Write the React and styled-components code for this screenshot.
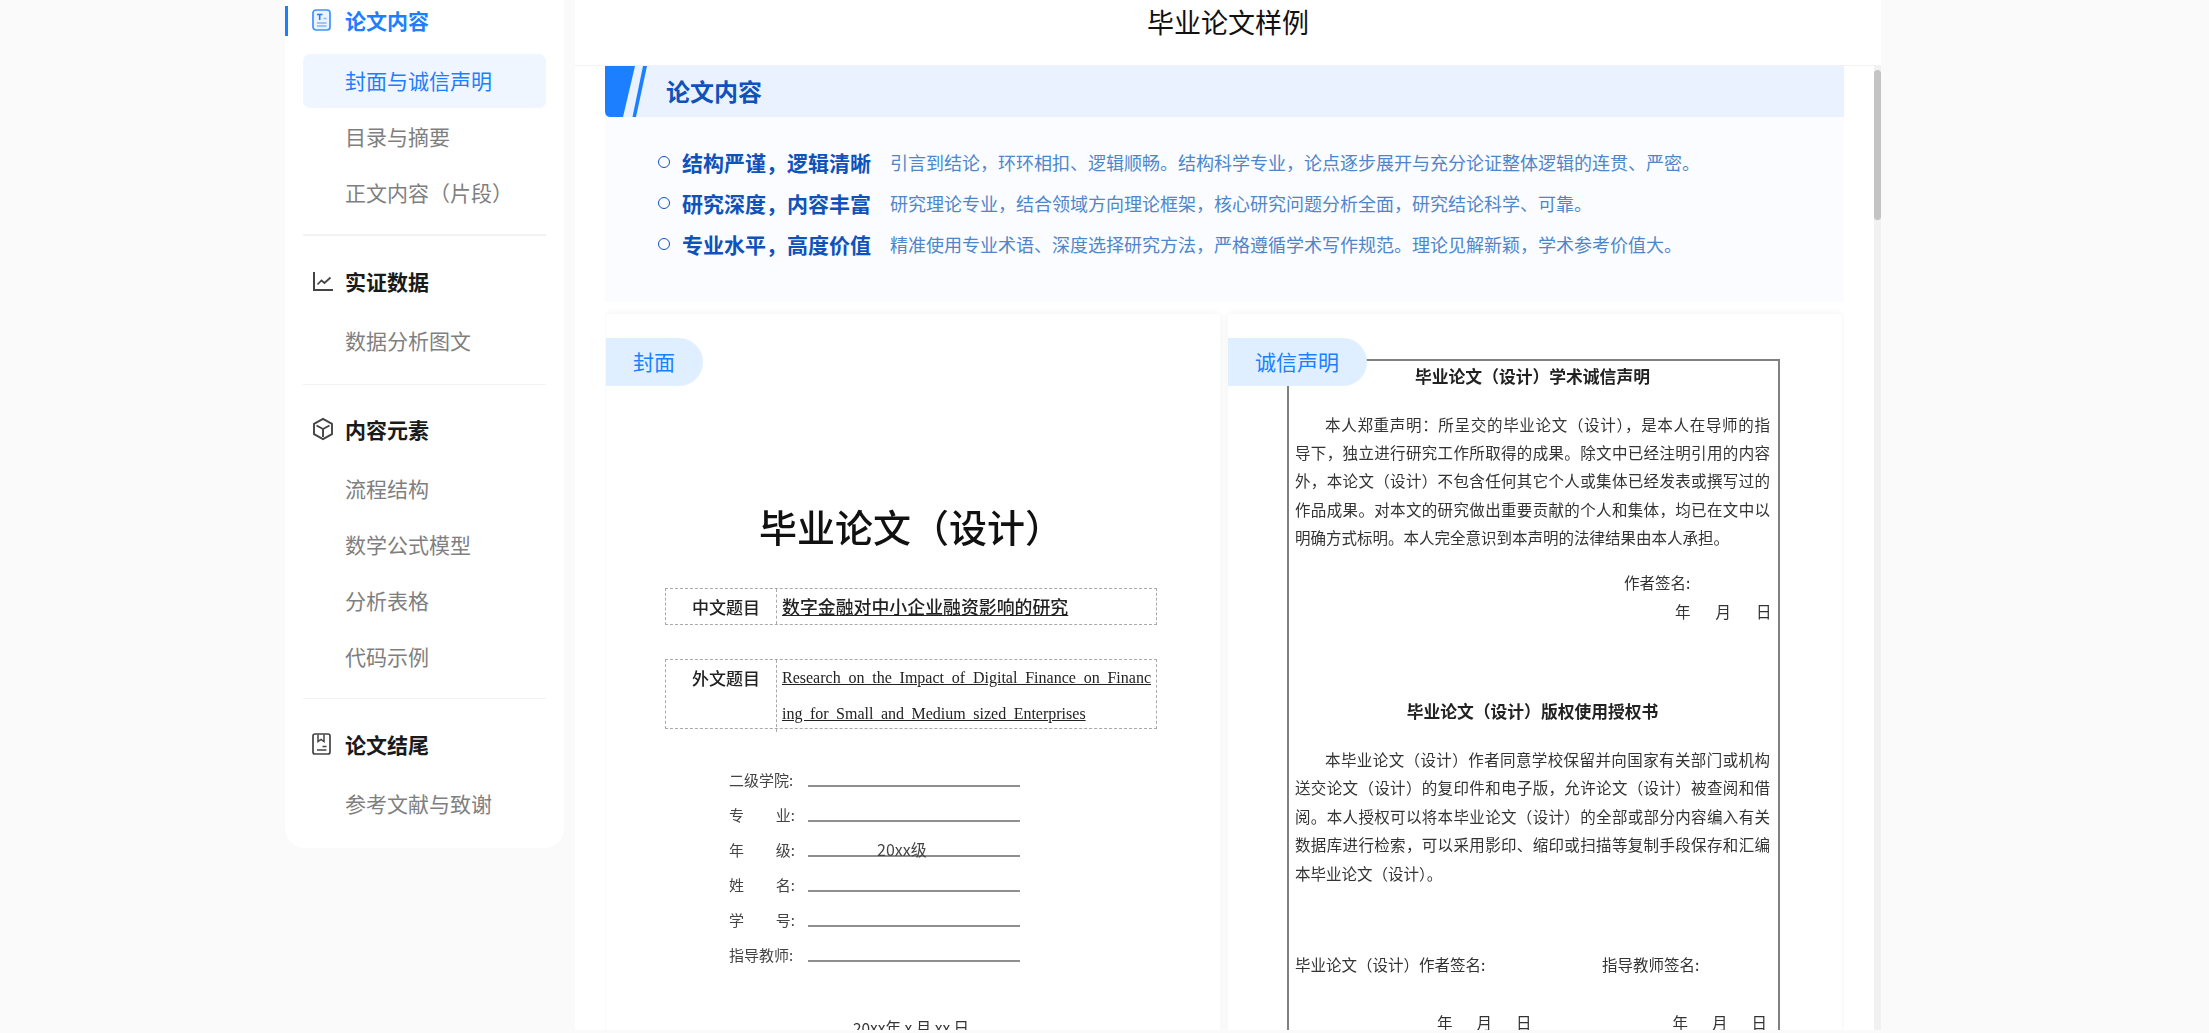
import React from "react";
import styled, { createGlobalStyle } from "styled-components";

const GlobalStyle = createGlobalStyle`
  html, body {
    margin: 0;
    padding: 0;
    height: 100%;
    overflow: hidden;
    background: #fafafa;
    font-family: "Noto Sans CJK SC", "Liberation Sans", sans-serif;
  }
  * {
    box-sizing: border-box;
  }
`;

const Page = styled.div`
  display: flex;
  align-items: flex-start;
  gap: 11px;
  height: 1033px;
  padding-left: 285px;
  overflow: hidden;
`;

/* sidebar */

const Sidebar = styled.aside`
  flex: none;
  width: 279px;
  padding: 6px 0 3px;
  background: #ffffff;
  border-radius: 0 0 20px 20px;
`;

const GroupTitle = styled.div`
  display: flex;
  align-items: center;
  height: 30px;
  padding-left: 24px;
  padding-bottom: 2px;
  border-left: 3px solid ${(p) => (p.$active ? "#1c7fff" : "transparent")};
  font-size: 21px;
  font-weight: 700;
  color: ${(p) => (p.$active ? "#1c7fff" : "#1a1a1a")};

  svg {
    flex: none;
    width: 22px;
    height: 24px;
    margin-right: 11px;
  }
`;

const NavList = styled.div`
  display: flex;
  flex-direction: column;
  gap: 2px;
  margin: ${(p) => p.$top}px 18px ${(p) => p.$bottom || 14}px;
`;

const NavItem = styled.div`
  height: 54px;
  padding-left: 42px;
  border-radius: 7px;
  font-size: 21px;
  line-height: 52px;
  background: ${(p) => (p.$active ? "#f0f6ff" : "transparent")};
  color: ${(p) => (p.$active ? "#1c7fff" : "#7f7f7f")};
`;

const Divider = styled.div`
  height: ${(p) => (p.$thick ? "2px" : "1px")};
  margin: 0 18px ${(p) => p.$after}px;
  background: #f2f2f2;
`;

/* main panel */

const Main = styled.main`
  flex: none;
  width: 1306px;
  height: 1030px;
  background: #ffffff;
  display: flex;
  flex-direction: column;
`;

const PageHeader = styled.header`
  flex: none;
  height: 66px;
  padding-top: 2px;
  text-align: center;
  font-size: 27px;
  line-height: 40px;
  color: #111111;
  border-bottom: 1px solid #f2f2f2;
`;

const ScrollArea = styled.div`
  flex: 1;
  min-height: 0;
  display: flex;
  padding-left: 30px;
`;

const Content = styled.div`
  flex: none;
  width: 1239px;
  margin-right: 30px;
  overflow: hidden;
`;

const ScrollTrack = styled.div`
  flex: none;
  width: 7px;
  padding-top: 4px;
  background: #f1f1f1;
`;

const ScrollThumb = styled.div`
  height: 150px;
  border-radius: 4px;
  background: #c4c4c4;
`;

const Banner = styled.div`
  display: flex;
  align-items: center;
  height: 51px;
  background: #e9f2fe;
  font-size: 24px;
  font-weight: 700;
  color: #0f52ba;

  svg {
    flex: none;
    width: 42px;
    height: 51px;
    margin-right: 19px;
  }
`;

const BannerTitle = styled.span`
  margin-top: -2px;
`;

const Highlights = styled.div`
  height: 185px;
  padding: 24px 0 0 53px;
  background: #fafcff;
`;

const HighlightRow = styled.div`
  display: flex;
  align-items: center;
  height: 41px;
`;

const Bullet = styled.span`
  flex: none;
  width: 12px;
  height: 12px;
  margin: 1px 12px 0 0;
  border: 1px solid #0f52ba;
  border-radius: 50%;
`;

const HighlightTitle = styled.strong`
  flex: none;
  width: 189px;
  margin-right: 19px;
  font-size: 21px;
  font-weight: 700;
  color: #0f52ba;
`;

const HighlightText = styled.span`
  font-size: 18px;
  color: #4f86c9;
`;

const CardRow = styled.div`
  display: grid;
  grid-template-columns: 614px 614px;
  gap: 8px;
  margin-top: 12px;
  padding: 0 1px;
`;

const Card = styled.section`
  position: relative;
  height: 760px;
  border-radius: 4px;
  background: #ffffff;
  box-shadow: 0 0 10px rgba(0, 0, 0, 0.06);
`;

const CardTab = styled.div`
  position: absolute;
  z-index: 1;
  top: 24px;
  left: 0;
  height: 48px;
  padding: 0 28px 0 27px;
  border-radius: 0 24px 24px 0;
  background: #e0efff;
  font-size: 21px;
  line-height: 47px;
  color: #1c7fff;
`;

/* cover scan */

const CoverDoc = styled.div`
  width: 492px;
  margin-left: 59px;
  padding-top: 190px;
  color: #222222;
  filter: blur(0.35px);
`;

const CoverTitle = styled.h1`
  margin: 0 0 40px;
  font-size: 38px;
  font-weight: 500;
  line-height: 44px;
  text-align: center;
  color: #111111;
`;

const TitleTable = styled.div`
  display: grid;
  grid-template-columns: 111px 1fr;
  height: ${(p) => p.$height}px;
  margin-bottom: ${(p) => p.$gap || 0}px;
  border: 1px dashed #aaaaaa;
`;

const TitleLabel = styled.div`
  padding-right: 16px;
  border-right: 1px dashed #aaaaaa;
  font-size: 17px;
  font-weight: 500;
  line-height: 35px;
  text-align: right;
`;

const TitleValue = styled.div`
  padding-left: 5px;
  font-size: 17.9px;
  font-weight: 500;
  line-height: 34px;
  text-decoration: underline;
  white-space: nowrap;
`;

const EnglishValue = styled.div`
  padding: 0 0 0 5px;
  font-family: "Liberation Serif", serif;
  font-size: 16px;
  line-height: 36px;
  text-decoration: underline;
  word-spacing: 3.5px;
`;

const EnglishLine = styled.div`
  width: 369px;
  white-space: nowrap;
  text-align: ${(p) => (p.$justify ? "justify" : "left")};
  text-align-last: ${(p) => (p.$justify ? "justify" : "left")};
`;

const FieldList = styled.div`
  margin: 34px 0 44px 64px;
`;

const FieldRow = styled.div`
  display: flex;
  height: 35px;
`;

const FieldLabel = styled.div`
  display: flex;
  justify-content: space-between;
  flex: none;
  width: 66px;
  margin-right: 13px;
  font-size: 15px;
  line-height: 33px;
  white-space: nowrap;
  color: #444444;
`;

const FieldLine = styled.div`
  width: 212px;
  height: 24px;
  padding-left: 69px;
  border-bottom: 2px solid #8f8f8f;
  font-size: 16px;
  line-height: 33px;
  color: #444444;
`;

const CoverDate = styled.div`
  font-size: 15.5px;
  line-height: 20px;
  text-align: center;
  color: #333333;
`;

/* statement scan */

const StatementDoc = styled.div`
  width: 493px;
  height: 720px;
  margin: 45px 0 0 59px;
  padding: 0 8px 0 6px;
  border: 2px solid #808080;
  border-bottom: none;
  color: #333333;
  filter: blur(0.35px);
`;

const DocHeading = styled.h2`
  margin: ${(p) => p.$gap || 0}px 0 18.5px;
  font-size: 16.8px;
  font-weight: 700;
  line-height: 30px;
  text-align: center;
  color: #222222;
`;

const DocLine = styled.div`
  height: 28.4px;
  padding-left: ${(p) => (p.$indent ? "30px" : 0)};
  font-size: 15.5px;
  line-height: 28.4px;
  white-space: nowrap;
  text-align: ${(p) => (p.$last ? "left" : "justify")};
  text-align-last: ${(p) => (p.$last ? "left" : "justify")};
`;

const SignLine = styled.div`
  margin: 17px 0 1px 329px;
  font-size: 15.5px;
  line-height: 28px;
`;

const DateGroup = styled.div`
  display: flex;
  gap: ${(p) => p.$gap}px;
  margin-left: ${(p) => p.$left}px;
  font-size: 15.5px;
  line-height: 28px;
`;

const SignGrid = styled.div`
  display: grid;
  grid-template-columns: 307px 1fr;
  margin: 63px 0 30px;
  font-size: 15.5px;
  line-height: 28px;
`;

const DateRow = styled.div`
  display: flex;
`;

const navGroups = [
  { title: "实证数据", icon: "chart", top: 17, bottom: 16, after: 30, items: ["数据分析图文"] },
  { title: "内容元素", icon: "cube", top: 17, after: 31, items: ["流程结构", "数学公式模型", "分析表格", "代码示例"] },
  { title: "论文结尾", icon: "book", top: 17, items: ["参考文献与致谢"] },
];

const highlights = [
  ["结构严谨，逻辑清晰", "引言到结论，环环相扣、逻辑顺畅。结构科学专业，论点逐步展开与充分论证整体逻辑的连贯、严密。"],
  ["研究深度，内容丰富", "研究理论专业，结合领域方向理论框架，核心研究问题分析全面，研究结论科学、可靠。"],
  ["专业水平，高度价值", "精准使用专业术语、深度选择研究方法，严格遵循学术写作规范。理论见解新颖，学术参考价值大。"],
];

const fields = [
  ["二级学院:"],
  ["专", "业:"],
  ["年", "级:", "20xx级"],
  ["姓", "名:"],
  ["学", "号:"],
  ["指导教师:"],
];

const honestyLines = [
  "本人郑重声明：所呈交的毕业论文（设计），是本人在导师的指",
  "导下，独立进行研究工作所取得的成果。除文中已经注明引用的内容",
  "外，本论文（设计）不包含任何其它个人或集体已经发表或撰写过的",
  "作品成果。对本文的研究做出重要贡献的个人和集体，均已在文中以",
  "明确方式标明。本人完全意识到本声明的法律结果由本人承担。",
];

const licenseLines = [
  "本毕业论文（设计）作者同意学校保留并向国家有关部门或机构",
  "送交论文（设计）的复印件和电子版，允许论文（设计）被查阅和借",
  "阅。本人授权可以将本毕业论文（设计）的全部或部分内容编入有关",
  "数据库进行检索，可以采用影印、缩印或扫描等复制手段保存和汇编",
  "本毕业论文（设计）。",
];

const NavIcon = ({ name }) => {
  if (name === "doc") {
    return (
      <svg viewBox="0 0 22 24" fill="none">
        <rect x="1" y="2" width="17" height="20" rx="3" fill="#eaf3ff" stroke="#3f92ff" strokeWidth="1.7" />
        <path d="M5 6.5h5.5M7.7 6.5v5.5" stroke="#1c7fff" strokeWidth="1.6" />
        <path d="M11.5 10.5h3M5 15h9.5M5 18h9.5" stroke="#7db6ff" strokeWidth="1.5" />
      </svg>
    );
  }
  if (name === "chart") {
    return (
      <svg viewBox="0 0 22 24" fill="none" stroke="#444444">
        <path d="M2 3v18h19" strokeWidth="2" />
        <path d="M5.5 15.5l4-4 3 2.5 6-5.5" strokeWidth="1.7" />
      </svg>
    );
  }
  if (name === "cube") {
    return (
      <svg viewBox="0 0 22 24" fill="none" stroke="#444444" strokeWidth="1.9">
        <path d="M11 1.8l9 5v10.4l-9 5-9-5V6.8z" strokeLinejoin="round" />
        <path d="M4.5 8.5L11 12l6.5-3.5M11 12v8" />
      </svg>
    );
  }
  return (
    <svg viewBox="0 0 22 24" fill="none" stroke="#444444">
      <rect x="1" y="2" width="17" height="20" rx="2" strokeWidth="1.7" />
      <path d="M6 2.5v7l3-2 3 2v-7" strokeWidth="1.5" />
      <path d="M10.5 14.5h4M5 18h9.5" strokeWidth="1.6" />
    </svg>
  );
};

const DateMarks = ({ gap, left }) => (
  <DateGroup $gap={gap} $left={left}>
    <span>年</span>
    <span>月</span>
    <span>日</span>
  </DateGroup>
);

export default function App() {
  return (
    <>
      <GlobalStyle />
      <Page>
        <Sidebar>
          <GroupTitle $active>
            <NavIcon name="doc" />
            论文内容
          </GroupTitle>
          <NavList $top={18}>
            <NavItem $active>封面与诚信声明</NavItem>
            <NavItem>目录与摘要</NavItem>
            <NavItem>正文内容（片段）</NavItem>
          </NavList>
          <Divider $thick $after={31} />
          {navGroups.map((group, i) => (
            <React.Fragment key={group.title}>
              <GroupTitle>
                <NavIcon name={group.icon} />
                {group.title}
              </GroupTitle>
              <NavList $top={group.top} $bottom={group.bottom}>
                {group.items.map((item) => (
                  <NavItem key={item}>{item}</NavItem>
                ))}
              </NavList>
              {i < navGroups.length - 1 && <Divider $after={group.after} />}
            </React.Fragment>
          ))}
        </Sidebar>

        <Main>
          <PageHeader>毕业论文样例</PageHeader>
          <ScrollArea>
            <Content>
              <Banner>
                <svg viewBox="0 0 42 51">
                  <path d="M0 0H30L18 51H6Q0 51 0 45Z" fill="#1c7fff" />
                  <path d="M38 0H42L31 51H27.5Z" fill="#1c7fff" />
                </svg>
                <BannerTitle>论文内容</BannerTitle>
              </Banner>
              <Highlights>
                {highlights.map(([title, text]) => (
                  <HighlightRow key={title}>
                    <Bullet />
                    <HighlightTitle>{title}</HighlightTitle>
                    <HighlightText>{text}</HighlightText>
                  </HighlightRow>
                ))}
              </Highlights>

              <CardRow>
                <Card>
                  <CardTab>封面</CardTab>
                  <CoverDoc>
                    <CoverTitle>毕业论文（设计）</CoverTitle>
                    <TitleTable $height={37} $gap={34}>
                      <TitleLabel>中文题目</TitleLabel>
                      <TitleValue>数字金融对中小企业融资影响的研究</TitleValue>
                    </TitleTable>
                    <TitleTable $height={70}>
                      <TitleLabel>外文题目</TitleLabel>
                      <EnglishValue>
                        <EnglishLine $justify>Research on the Impact of Digital Finance on Financ</EnglishLine>
                        <EnglishLine>ing for Small and Medium sized Enterprises</EnglishLine>
                      </EnglishValue>
                    </TitleTable>
                    <FieldList>
                      {fields.map(([a, b, value]) => (
                        <FieldRow key={a}>
                          <FieldLabel>
                            <span>{a}</span>
                            {b && <span>{b}</span>}
                          </FieldLabel>
                          <FieldLine>{value}</FieldLine>
                        </FieldRow>
                      ))}
                    </FieldList>
                    <CoverDate>20xx年 x 月 xx 日</CoverDate>
                  </CoverDoc>
                </Card>

                <Card>
                  <CardTab>诚信声明</CardTab>
                  <StatementDoc>
                    <DocHeading>毕业论文（设计）学术诚信声明</DocHeading>
                    {honestyLines.map((line, i) => (
                      <DocLine key={line} $indent={i === 0} $last={i === honestyLines.length - 1}>
                        {line}
                      </DocLine>
                    ))}
                    <SignLine>作者签名:</SignLine>
                    <DateMarks gap={25} left={380} />
                    <DocHeading $gap={71}>毕业论文（设计）版权使用授权书</DocHeading>
                    {licenseLines.map((line, i) => (
                      <DocLine key={line} $indent={i === 0} $last={i === licenseLines.length - 1}>
                        {line}
                      </DocLine>
                    ))}
                    <SignGrid>
                      <span>毕业论文（设计）作者签名:</span>
                      <span>指导教师签名:</span>
                    </SignGrid>
                    <DateRow>
                      <DateMarks gap={24} left={142} />
                      <DateMarks gap={24} left={141} />
                    </DateRow>
                  </StatementDoc>
                </Card>
              </CardRow>
            </Content>
            <ScrollTrack>
              <ScrollThumb />
            </ScrollTrack>
          </ScrollArea>
        </Main>
      </Page>
    </>
  );
}
